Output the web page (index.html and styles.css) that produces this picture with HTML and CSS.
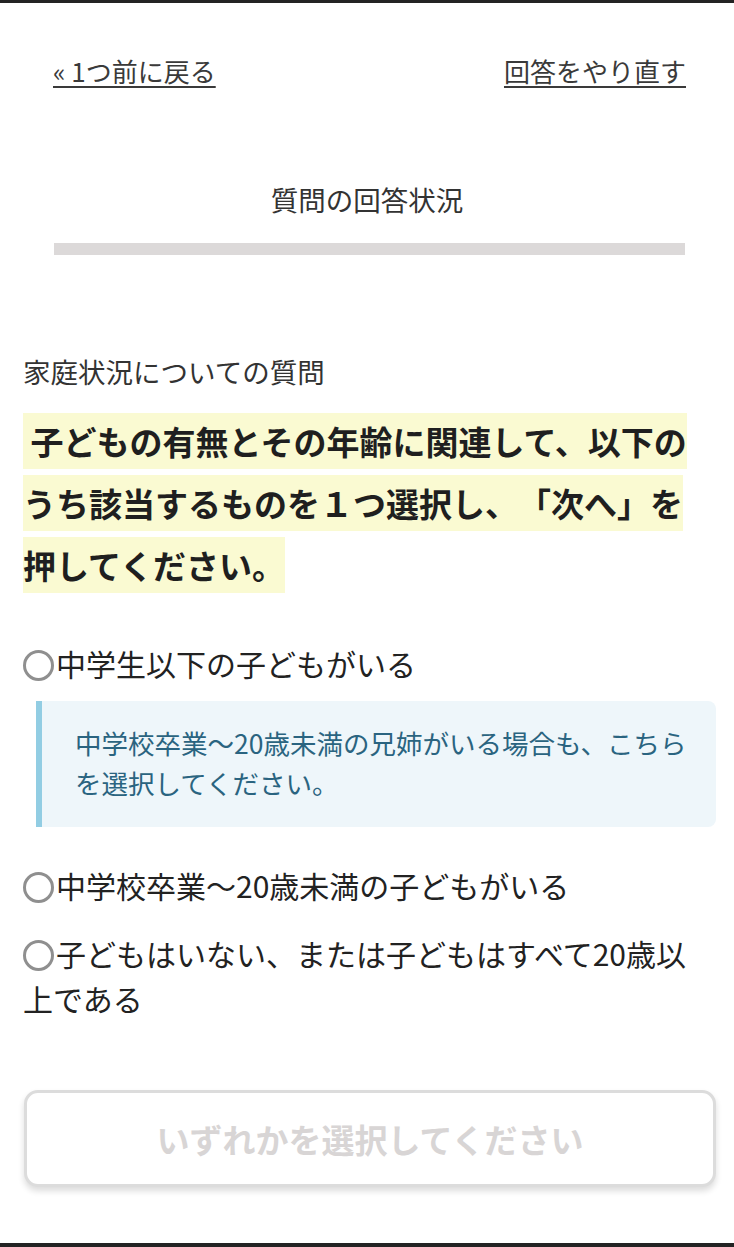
FILE: index.html
```html
<!DOCTYPE html>
<html lang="ja">
<head>
<meta charset="utf-8">
<title>質問の回答状況</title>
<link rel="stylesheet" href="styles.css">
</head>
<body>
<div class="page">
  <nav class="nav">
    <a class="nav-link" href="#">« 1つ前に戻る</a>
    <a class="nav-link" href="#">回答をやり直す</a>
  </nav>

  <section class="progress">
    <p class="progress-title">質問の回答状況</p>
    <div class="progress-bar"></div>
  </section>

  <main class="main">
    <p class="category">家庭状況についての質問</p>
    <h1 class="question"><span class="question-mark">&nbsp;子どもの有無とその年齢に関連して、以下のうち該当するものを１つ選択し、「次へ」を押してください。</span></h1>

    <div class="options">
      <label class="option"><input class="radio" type="radio" name="child">中学生以下の子どもがいる</label>
      <div class="note">中学校卒業〜20歳未満の兄姉がいる場合も、こちらを選択してください。</div>
      <label class="option option-2"><input class="radio" type="radio" name="child">中学校卒業〜20歳未満の子どもがいる</label>
      <label class="option option-3"><input class="radio" type="radio" name="child">子どもはいない、または子どもはすべて20歳以上である</label>
    </div>

    <button class="submit" type="button" disabled>いずれかを選択してください</button>
  </main>
</div>
</body>
</html>
```

FILE: styles.css
```css
html, body {
  margin: 0;
  padding: 0;
  background: #ffffff;
}

body {
  font-family: "Noto Sans CJK JP", "Noto Sans", sans-serif;
  color: #222222;
  text-spacing-trim: space-all;
}

.page {
  min-height: 1247px;
  box-sizing: border-box;
  border-top: 3px solid #232323;
  border-bottom: 4px solid #232323;
}

.nav {
  display: flex;
  justify-content: space-between;
  padding: 0 48px 0 53px;
  margin-top: 50px;
}

.nav-link {
  font-size: 26px;
  line-height: 36px;
  color: #3a3a3a;
  text-decoration: underline;
  text-decoration-thickness: 2px;
  text-underline-offset: 4px;
}

.progress {
  margin-top: 92px;
}

.progress-title {
  margin: 0;
  text-align: center;
  font-size: 27.5px;
  line-height: 36px;
  color: #333333;
}

.progress-bar {
  height: 12px;
  margin: 26px 49px 0 54px;
  background: #dcd9d9;
}

.main {
  padding: 0 18px 0 23px;
  margin-top: 98px;
}

.category {
  margin: 0;
  font-size: 27.5px;
  line-height: 36px;
  color: #333333;
}

.question {
  margin: 21px 5px 0 0;
  font-size: 33px;
  line-height: 62px;
  font-weight: 700;
  color: #1f1f1f;
  text-spacing-trim: space-all;
}

.question-mark {
  background: #fafad2;
  padding: 4px 0;
}

.options {
  margin-top: 45px;
  padding-right: 5px;
}

.option {
  display: block;
  font-size: 30px;
  line-height: 45px;
  color: #222222;
}

.radio {
  appearance: none;
  -webkit-appearance: none;
  box-sizing: border-box;
  width: 31px;
  height: 31px;
  margin: 0 2px 0 0;
  border: 3px solid #8f8f8f;
  border-radius: 50%;
  background: #ffffff;
  vertical-align: -5px;
}

.note {
  margin: 15px -5px 0 13px;
  padding: 22px 24px 24px 33px;
  border-left: 6px solid #92cde3;
  border-radius: 0 8px 8px 0;
  background: #eef6fa;
  color: #2a6480;
  font-size: 26.5px;
  line-height: 40px;
}

.option-2 {
  margin-top: 36px;
}

.option-3 {
  margin-top: 23px;
}

.submit {
  display: block;
  box-sizing: border-box;
  width: 692px;
  height: 97px;
  margin: 69px 0 0 1px;
  border: 3px solid #dcdcdc;
  border-radius: 14px;
  background: #ffffff;
  box-shadow: 0 4px 6px rgba(0, 0, 0, 0.14);
  font-family: "Noto Sans CJK JP", "Noto Sans", sans-serif;
  font-size: 33px;
  font-weight: 700;
  color: #d8d5d5;
}
```
